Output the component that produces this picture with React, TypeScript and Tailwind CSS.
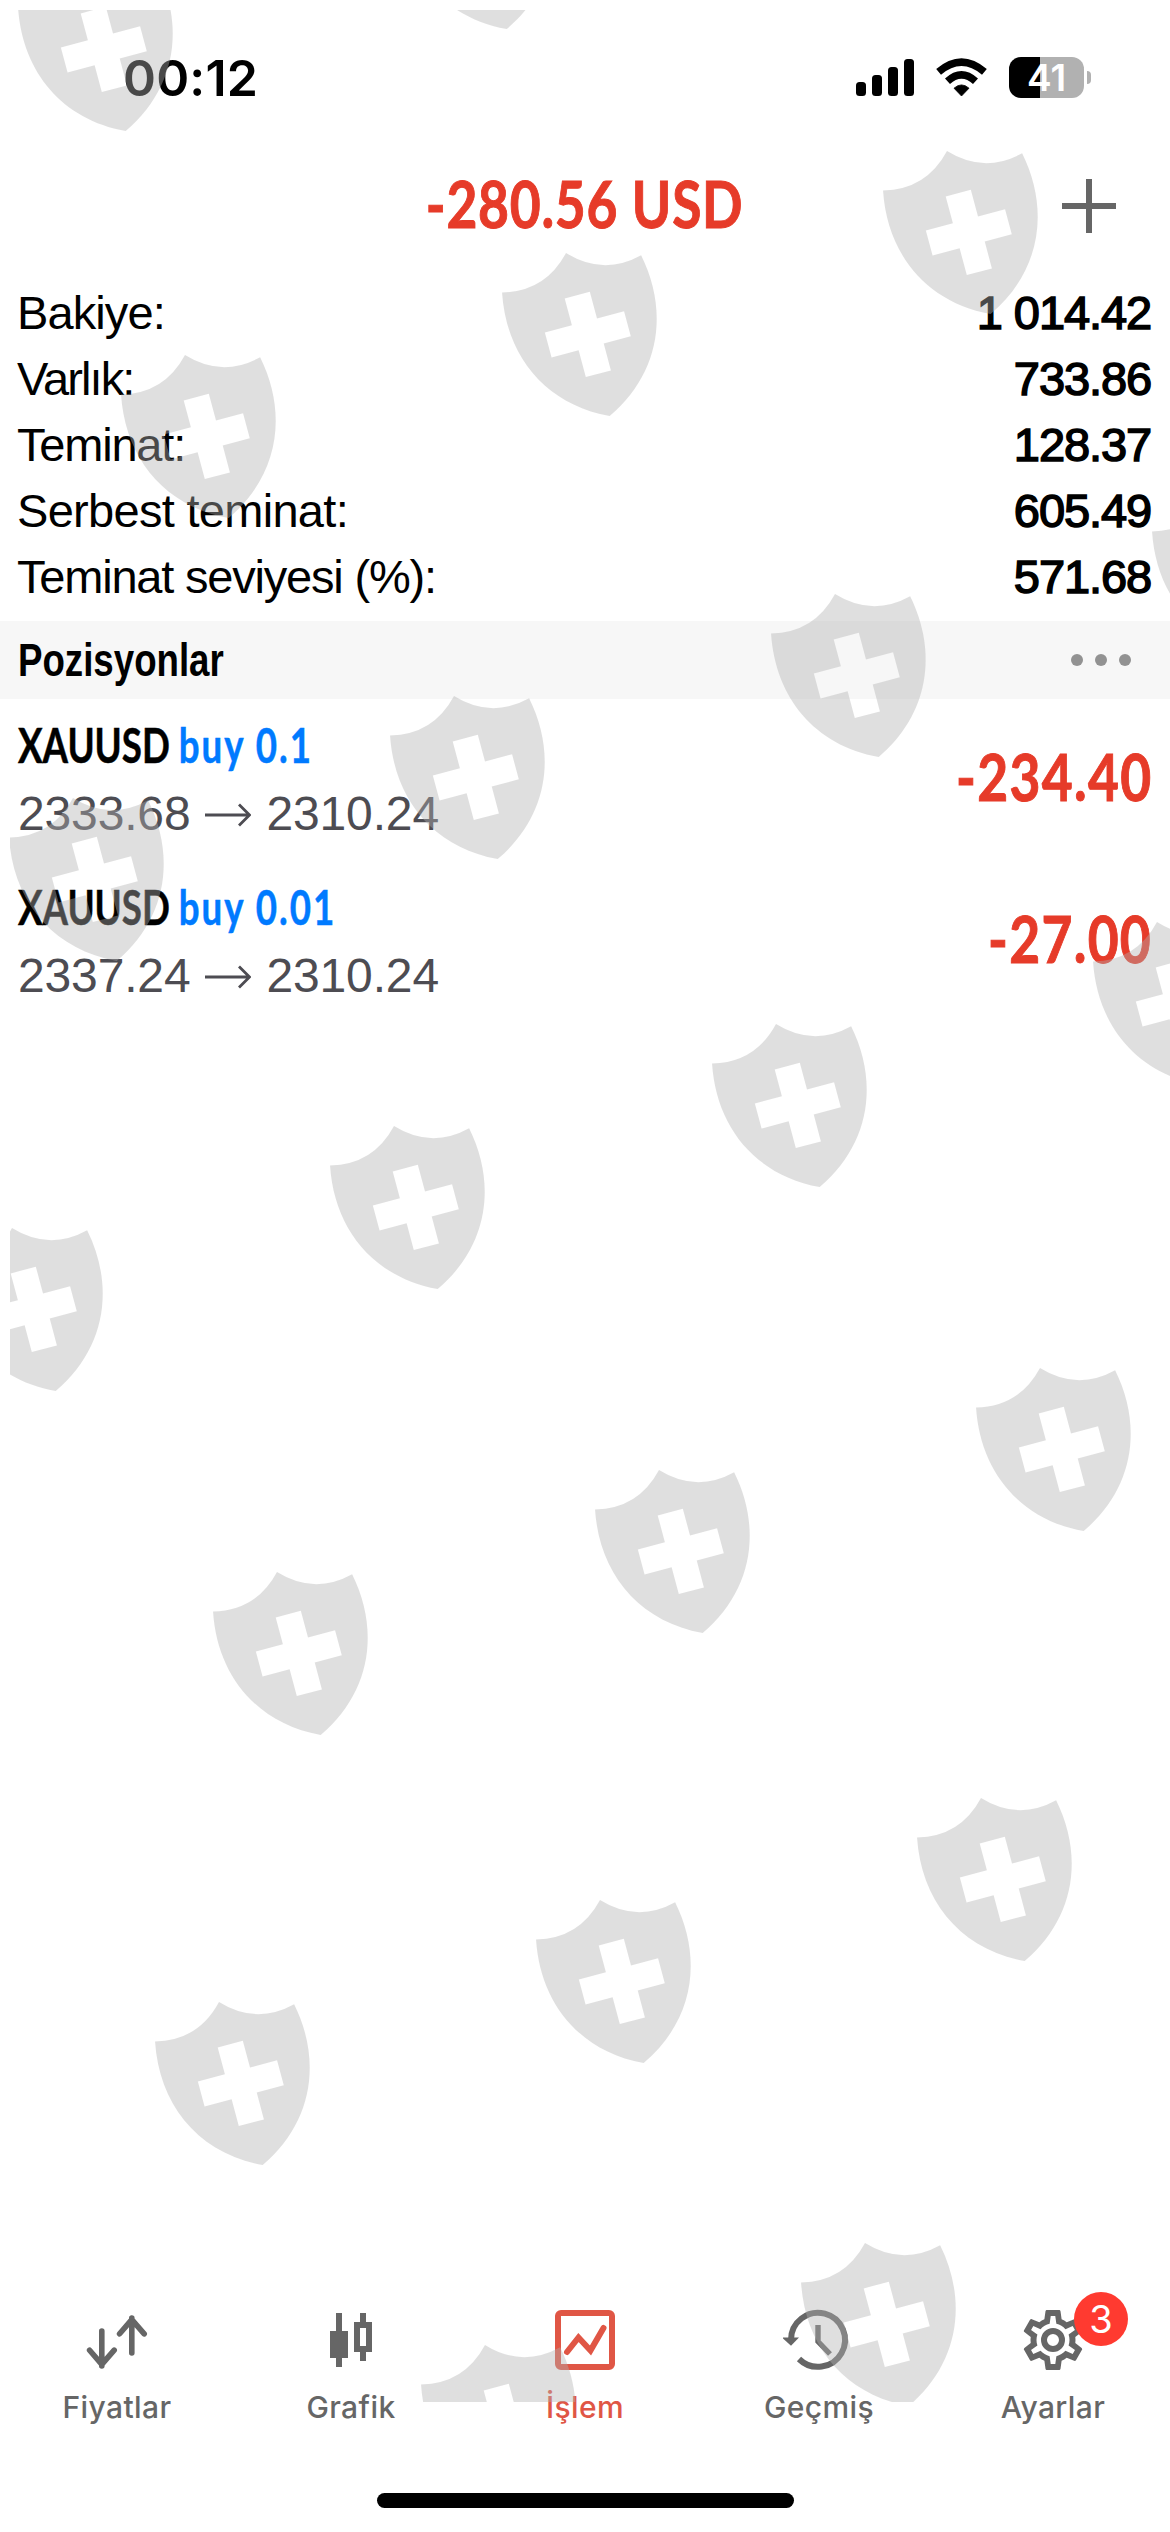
import type { ReactNode } from "react";
import { clsx } from "clsx";

const summary = [
  { label: "Bakiye:", value: "1 014.42", tracking: "tracking-[-0.9px]" },
  { label: "Varlık:", value: "733.86", tracking: "tracking-[-1.9px]" },
  { label: "Teminat:", value: "128.37", tracking: "tracking-[-1.2px]" },
  { label: "Serbest teminat:", value: "605.49", tracking: "tracking-[-0.7px]" },
  { label: "Teminat seviyesi (%):", value: "571.68", tracking: "tracking-[-1.2px]" },
];

const positions = [
  { symbol: "XAUUSD", side: "buy 0.1", open: "2333.68", current: "2310.24", profit: "-234.40" },
  { symbol: "XAUUSD", side: "buy 0.01", open: "2337.24", current: "2310.24", profit: "-27.00" },
];

// top notch of every shield in the overlay
const shields = [
  [82, -32], [463, -134],
  [185, 355], [566, 253], [947, 151],
  [73, 798], [454, 696], [835, 594], [1216, 492],
  [12, 1228], [394, 1126], [776, 1024], [1157, 922],
  [277, 1572], [659, 1470], [1040, 1368],
  [219, 2002], [600, 1900], [981, 1798],
  [485, 2345], [865, 2243],
];

function ShieldOverlay() {
  return (
    <div className="absolute left-[10px] top-[10px] w-[1160px] h-[2392px] overflow-hidden pointer-events-none">
      <svg width="1160" height="2392" viewBox="10 10 1160 2392" fill="#b1b1b1" fillOpacity="0.41">
        {shields.map(([x, y]) => (
          <path
            key={`${x}-${y}`}
            transform={`translate(${x} ${y}) rotate(-15)`}
            fillRule="evenodd"
            d="M0 0Q30 32 72 21.6C84.5 84 59 141 0 168.8C-59 141 -84.5 84 -72 21.6Q-30 32 0 0ZM-13 43.5V71.3H-41V97.3H-13V125H13V97.3H41V71.3H13V43.5Z"
          />
        ))}
      </svg>
    </div>
  );
}

function StatusBar() {
  return (
    <div className="h-[132px] flex items-start justify-between pl-[123px] pr-[79px] font-['Inter',sans-serif]">
      <span className="mt-[48px] text-[50px] leading-[60px] font-semibold tracking-[0.2px]">00:12</span>
      <div className="mt-[57px] flex items-start">
        <svg width="58" height="41" viewBox="0 0 58 41">
          <rect x="0" y="25" width="10" height="14" rx="3.5" />
          <rect x="16" y="18" width="10" height="21" rx="3.5" />
          <rect x="32" y="10" width="10" height="29" rx="3.5" />
          <rect x="48" y="2" width="10" height="37" rx="3.5" />
        </svg>
        <svg className="ml-[22px]" width="51" height="41" viewBox="0 0 51 41">
          <path d="M25.5 39L18 31.2Q25.5 24.6 33 31.2Z" stroke="#000" strokeWidth="0.8" strokeLinejoin="round" />
          <path d="M11.5 24.2Q25.5 11.5 39.5 24.2" fill="none" stroke="#000" strokeWidth="7.4" />
          <path d="M2.6 14.9Q25.5 -4.6 48.4 14.9" fill="none" stroke="#000" strokeWidth="7.4" />
        </svg>
        <div className="ml-[22px] w-[75px] h-[41px] rounded-[12px] bg-[linear-gradient(to_right,#000_31px,#b1b1b1_31px)] text-white text-[37px] leading-[41px] font-semibold text-center">
          41
        </div>
        <div className="ml-[3px] mt-[14px] w-[4px] h-[13px] rounded-r-full bg-[#b1b1b1]" />
      </div>
    </div>
  );
}

function SummaryList() {
  return (
    <div className="pl-[17px] pr-[19px] pb-[11px] text-[47px] leading-[66px]">
      {summary.map(({ label, value, tracking }) => (
        <div key={label} className="h-[66px] flex justify-between">
          <span className={tracking}>{label}</span>
          <span className="tracking-[-1.1px] [-webkit-text-stroke:1.5px_#000]">{value}</span>
        </div>
      ))}
    </div>
  );
}

function PositionRow({ symbol, side, open, current, profit }: (typeof positions)[number]) {
  return (
    <div className="h-[162px] pl-[18px] pr-[19px] flex justify-between">
      <div className="pt-[14px]">
        <p className="h-[64px] text-[47px] leading-[64px] font-bold font-['Lato',sans-serif] origin-left scale-x-[0.78] whitespace-nowrap [-webkit-text-stroke:0.5px_currentColor]">
          {symbol} <span className="text-[#007aff] tracking-[2.6px]">{side}</span>
        </p>
        <p className="mt-[5px] flex items-center text-[48px] leading-[64px] tracking-[-0.15px] text-[#4d4c52]">
          {open}
          <svg className="mx-[15px] mt-[2px]" width="46" height="24" viewBox="0 0 46 24" fill="none" stroke="currentColor" strokeWidth="2.8">
            <path d="M0 12H44M34 1.5L44.5 12L34 22.5" />
          </svg>
          {current}
        </p>
      </div>
      <span className="mt-[37px] h-[80px] text-[65px] leading-[80px] font-bold font-['Lato',sans-serif] text-[#e63b29] origin-right scale-x-[0.82] tracking-[1.6px] -mr-[1px] [-webkit-text-stroke:1px_#e63b29]">
        {profit}
      </span>
    </div>
  );
}

function IconBox({ children }: { children: ReactNode }) {
  return (
    <svg width="72" height="72" viewBox="0 0 72 72" fill="none">
      {children}
    </svg>
  );
}

function PricesIcon() {
  return (
    <IconBox>
      <g stroke="currentColor" strokeWidth="5.6" strokeLinecap="round">
        <path d="M20.8 27V62M8.6 46.2L20.8 60.4L33.2 46.2" />
        <path d="M50.8 49V14M38.6 29.8L50.8 15.6L63.2 29.8" />
      </g>
    </IconBox>
  );
}

function CandlesIcon() {
  return (
    <IconBox>
      <path fill="currentColor" d="M21 9h6v18h6v27h-6v9h-6v-9h-6V27h6z" />
      <path fill="currentColor" fillRule="evenodd" d="M45 9h6v9h6v30h-6v9h-6v-9h-6V18h6zM45 24v18h6V24z" />
    </IconBox>
  );
}

function TradeIcon() {
  return (
    <IconBox>
      <g stroke="currentColor" strokeWidth="6">
        <rect x="9" y="9" width="54" height="54" rx="3" />
        <path d="M18 48L29.5 33.5L41.5 46.5L54.5 24" strokeLinecap="round" />
      </g>
    </IconBox>
  );
}

function HistoryIcon() {
  return (
    <IconBox>
      <path d="M8 36A27 27 0 1 1 16 55" stroke="currentColor" strokeWidth="6" />
      <path d="M-1 33.5H16L8 41.8Z" fill="currentColor" />
      <path d="M35 21V37.5L47 50" stroke="currentColor" strokeWidth="5.4" />
    </IconBox>
  );
}

function SettingsIcon() {
  return (
    <svg width="72" height="72" viewBox="0 0 24 24" fill="currentColor">
      <path d="M12,8A4,4 0 0,1 16,12A4,4 0 0,1 12,16A4,4 0 0,1 8,12A4,4 0 0,1 12,8M12,10A2,2 0 0,0 10,12A2,2 0 0,0 12,14A2,2 0 0,0 14,12A2,2 0 0,0 12,10M10,22C9.75,22 9.54,21.82 9.5,21.58L9.13,18.93C8.5,18.68 7.96,18.34 7.44,17.94L4.95,18.95C4.73,19.03 4.46,18.95 4.34,18.73L2.34,15.27C2.21,15.05 2.27,14.78 2.46,14.63L4.57,12.97L4.5,12L4.57,11L2.46,9.37C2.27,9.22 2.21,8.95 2.34,8.73L4.34,5.27C4.46,5.05 4.73,4.96 4.95,5.05L7.44,6.05C7.96,5.66 8.5,5.32 9.13,5.07L9.5,2.42C9.54,2.18 9.75,2 10,2H14C14.25,2 14.46,2.18 14.5,2.42L14.87,5.07C15.5,5.32 16.04,5.66 16.56,6.05L19.05,5.05C19.27,4.96 19.54,5.05 19.66,5.27L21.66,8.73C21.79,8.95 21.73,9.22 21.54,9.37L19.43,11L19.5,12L19.43,13L21.54,14.63C21.73,14.78 21.79,15.05 21.66,15.27L19.66,18.73C19.54,18.95 19.27,19.04 19.05,18.95L16.56,17.95C16.04,18.34 15.5,18.68 14.87,18.93L14.5,21.58C14.46,21.82 14.25,22 14,22H10M11.25,4L10.88,6.61C9.68,6.86 8.62,7.5 7.85,8.39L5.44,7.35L4.69,8.65L6.8,10.2C6.4,11.37 6.4,12.64 6.8,13.8L4.68,15.36L5.43,16.66L7.86,15.62C8.63,16.5 9.68,17.14 10.87,17.38L11.24,20H12.76L13.13,17.39C14.32,17.14 15.37,16.5 16.14,15.62L18.57,16.66L19.32,15.36L17.2,13.81C17.6,12.64 17.6,11.37 17.2,10.2L19.31,8.65L18.56,7.35L16.15,8.39C15.38,7.5 14.32,6.86 13.12,6.62L12.75,4H11.25Z" />
    </svg>
  );
}

const tabs = [
  { label: "Fiyatlar", icon: PricesIcon },
  { label: "Grafik", icon: CandlesIcon },
  { label: "İşlem", icon: TradeIcon, active: true },
  { label: "Geçmiş", icon: HistoryIcon },
  { label: "Ayarlar", icon: SettingsIcon, badge: 3 },
];

function TabBar() {
  return (
    <nav className="grid grid-cols-5 h-[189px] font-['Inter',sans-serif]">
      {tabs.map(({ label, icon: Icon, active, badge }) => (
        <button
          key={label}
          className={clsx("flex flex-col items-center", active ? "text-[#e05645]" : "text-[#666]")}
        >
          <span className="relative">
            <Icon />
            {badge && (
              <span className="absolute left-[57px] top-[-12px] size-[54px] rounded-full bg-[#ff3a30] text-white text-[38px] leading-[54px] text-center">
                {badge}
              </span>
            )}
          </span>
          <span className="mt-[13px] text-[30px] leading-[36px] font-medium tracking-[0.4px]">{label}</span>
        </button>
      ))}
    </nav>
  );
}

export default function App() {
  return (
    <div className="relative w-[1170px] h-[2532px] flex flex-col overflow-hidden bg-white text-black font-['Liberation_Sans',sans-serif]">
      <StatusBar />

      <header className="h-[148px] grid grid-cols-[1fr_auto_1fr] items-center pr-[54px] pl-[54px]">
        <span />
        <h1 className="text-[65px] leading-[80px] font-bold font-['Lato',sans-serif] text-[#e63b29] scale-x-[0.82] tracking-[0.9px] whitespace-nowrap -mt-[6px] [-webkit-text-stroke:1px_#e63b29]">
          -280.56 USD
        </h1>
        <svg className="justify-self-end" width="54" height="54" viewBox="0 0 54 54" stroke="#666" strokeWidth="6">
          <path d="M27 0V54M0 27H54" />
        </svg>
      </header>

      <SummaryList />

      <div className="h-[78px] pl-[18px] pr-[39px] flex items-center justify-between bg-[#f7f7f7]">
        <h2 className="text-[47px] leading-[78px] font-bold origin-left scale-x-[0.78]">Pozisyonlar</h2>
        <div className="flex gap-3">
          <span className="size-3 rounded-full bg-[#929292]" />
          <span className="size-3 rounded-full bg-[#929292]" />
          <span className="size-3 rounded-full bg-[#929292]" />
        </div>
      </div>

      <main className="flex-1">
        {positions.map((position) => (
          <PositionRow key={position.side} {...position} />
        ))}
      </main>

      <TabBar />
      <div className="mx-auto mb-[24px] w-[417px] h-[15px] shrink-0 rounded-full bg-black" />

      <ShieldOverlay />
    </div>
  );
}
